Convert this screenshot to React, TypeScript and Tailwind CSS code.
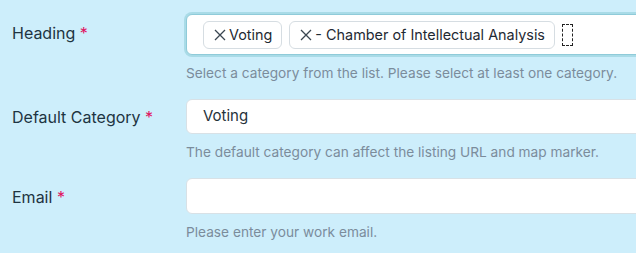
const font = { fontFamily: 'Inter, "Noto Sans", sans-serif' }

function Label({ text }: { text: string }) {
  return (
    <div className="w-[174px] shrink-0 text-[16px] text-[#1e3442] leading-[20px]">
      {text} <span className="text-[#e0115f]">*</span>
    </div>
  )
}

function Cross() {
  return (
    <svg width="12" height="12" viewBox="0 0 12 12" className="shrink-0">
      <path d="M1 1 L11 11 M11 1 L1 11" stroke="#3a4650" strokeWidth="1.3" fill="none" />
    </svg>
  )
}

function Tag({ text }: { text: string }) {
  return (
    <span className="flex items-center gap-[3px] h-[28px] pl-[10px] pr-[9px] rounded-[6px] border border-[#d6dde2] bg-white text-[14.4px] text-[#1f2a33]">
      <Cross />
      {text}
    </span>
  )
}

function Help({ text }: { text: string }) {
  return <p className="mt-[8px] text-[13.7px] leading-[20px] text-[#7b8c9b]">{text}</p>
}

export default function App() {
  return (
    <div className="w-[636px] h-[253px] overflow-hidden bg-[#cdeefb] pt-[14px] pl-[12px]" style={font}>
      <div className="flex flex-col gap-[16px]">
        <div className="flex">
          <div className="pt-[9px]"><Label text="Heading" /></div>
          <div className="flex flex-col">
            <div className="w-[470px] h-[41px] flex items-center gap-[7px] pl-[16px] rounded-[6px] bg-white border border-[#8fcbd9] shadow-[0_0_0_2px_#a9dbe7]">
              <Tag text="Voting" />
              <Tag text="- Chamber of Intellectual Analysis" />
              <span className="w-[11px] h-[22px] border border-dashed border-[#222]" />
            </div>
            <Help text="Select a category from the list. Please select at least one category." />
          </div>
        </div>

        <div className="flex">
          <div className="pt-[8px]"><Label text="Default Category" /></div>
          <div className="flex flex-col">
            <div className="w-[470px] h-[35px] flex items-center pl-[16px] rounded-[6px] bg-white border border-[#d8e1e6] text-[15px] text-[#26323b]">
              Voting
            </div>
            <Help text="The default category can affect the listing URL and map marker." />
          </div>
        </div>

        <div className="flex">
          <div className="pt-[9px]"><Label text="Email" /></div>
          <div className="flex flex-col">
            <div className="w-[470px] h-[36px] rounded-[6px] bg-white border border-[#d8e1e6]" />
            <Help text="Please enter your work email." />
          </div>
        </div>
      </div>
    </div>
  )
}
